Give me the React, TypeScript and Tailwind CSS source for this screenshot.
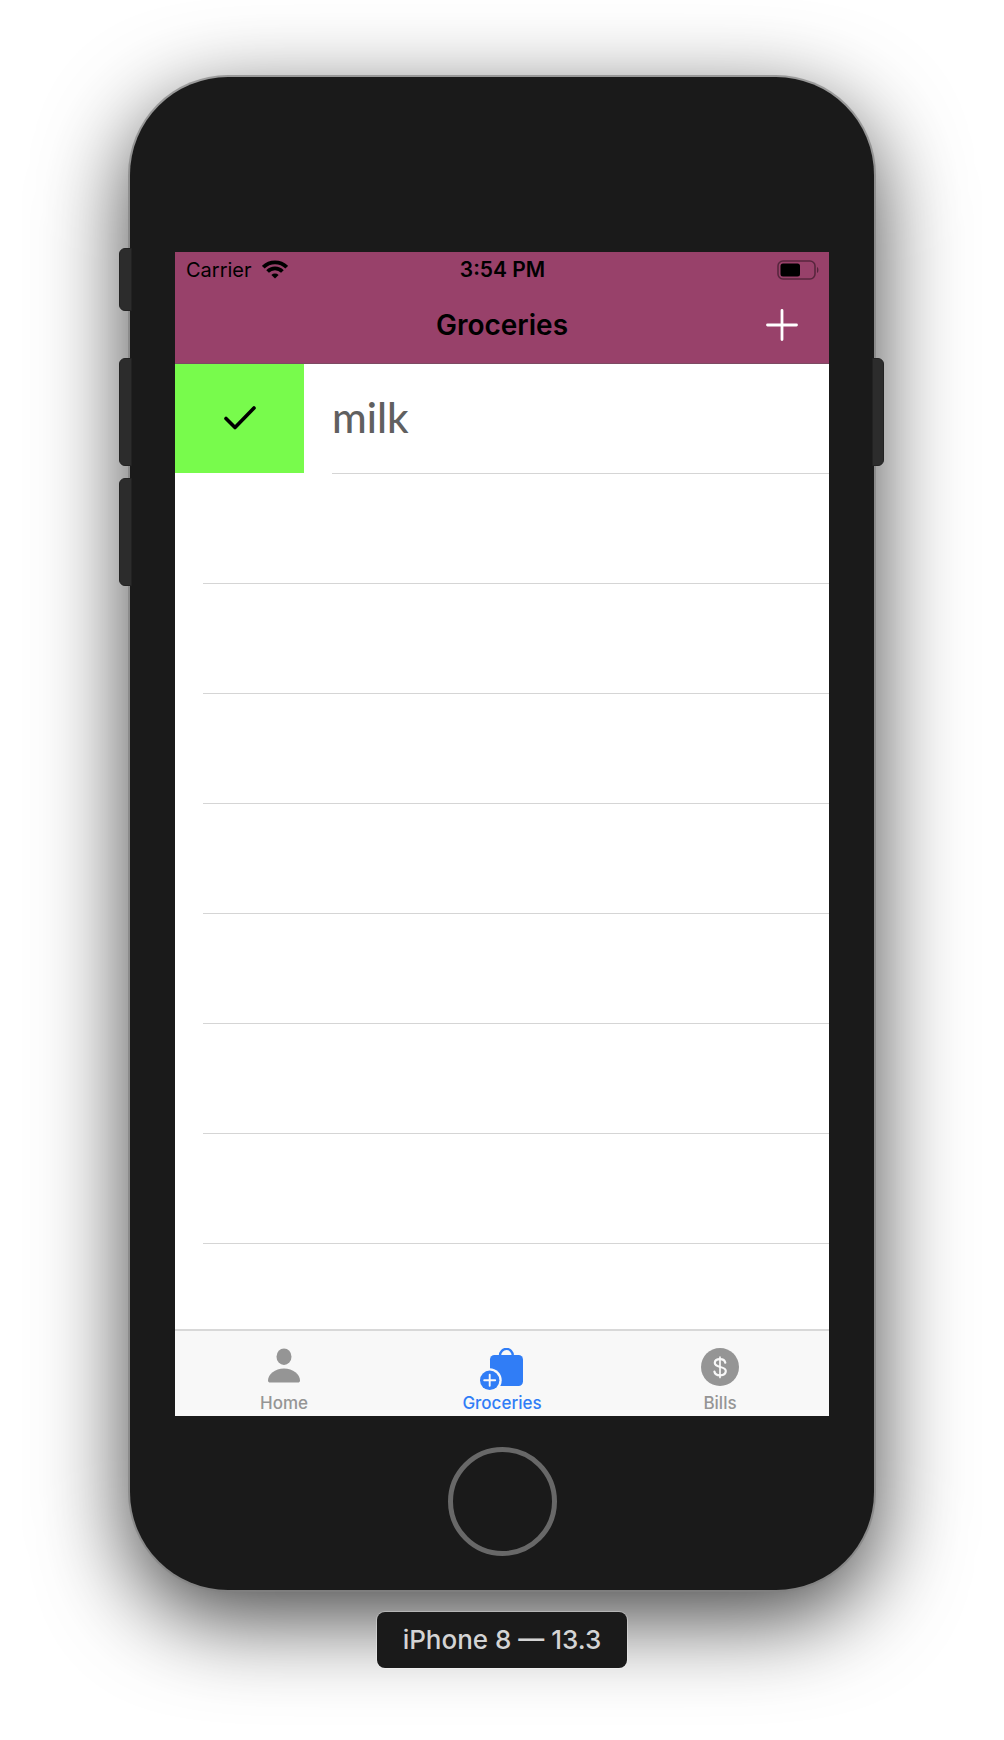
import React from "react";

const emptyRows = [1, 2, 3, 4, 5, 6, 7];

function WifiIcon() {
  return (
    <svg width="26" height="19" viewBox="0 0 26 19" aria-hidden="true">
      <g fill="none" stroke="#000" strokeWidth="3.8">
        <path d="M1.3 7.2a16.6 16.6 0 0 1 23.4 0" />
        <path d="M5.6 11.5a10.5 10.5 0 0 1 14.8 0" />
      </g>
      <path d="M13 18.6 9.4 15a5.1 5.1 0 0 1 7.2 0Z" />
    </svg>
  );
}

function BatteryIcon() {
  return (
    <svg width="42" height="20" viewBox="0 0 42 20" aria-hidden="true">
      <rect x="1" y="1" width="37" height="18" rx="5" fill="none" stroke="#000" strokeOpacity="0.42" strokeWidth="1.6" />
      <rect x="3.5" y="3.5" width="19.5" height="13" rx="2.5" />
      <path d="M40 7v6c1.9-.6 1.9-5.4 0-6Z" fillOpacity="0.45" />
    </svg>
  );
}

function PlusIcon() {
  return (
    <svg width="32" height="32" viewBox="0 0 32 32" aria-hidden="true">
      <path d="M16 1.5v29M1.5 16h29" stroke="#fff" strokeWidth="2.8" strokeLinecap="round" />
    </svg>
  );
}

function CheckIcon() {
  return (
    <svg width="32" height="24" viewBox="0 0 32 24" fill="none" aria-hidden="true">
      <path d="M2 12.5 11 21.5 30 2" stroke="#000" strokeWidth="3.6" strokeLinecap="round" strokeLinejoin="round" />
    </svg>
  );
}

function PersonIcon() {
  return (
    <svg width="44" height="44" viewBox="0 0 44 44" fill="#959595" aria-hidden="true">
      <ellipse cx="22" cy="8.7" rx="7.5" ry="8.3" />
      <path d="M6 32.5c0-6 7-12 16-12s16 6 16 12c0 1.5-.9 2-2.2 2H8.2C6.9 34.5 6 34 6 32.500Z" />
    </svg>
  );
}

function BagIcon() {
  return (
    <svg width="44" height="44" viewBox="0 0 44 44" aria-hidden="true">
      <path d="M20 8.500v-1a6.400 6.600 0 0 1 12.800 0v1" fill="none" stroke="#307df6" strokeWidth="2.300" />
      <rect x="10" y="7" width="33" height="31" rx="4.500" fill="#307df6" />
      <circle cx="9.700" cy="32.300" r="12" fill="#f8f8f8" />
      <circle cx="9.700" cy="32.300" r="9.700" fill="#307df6" />
      <path d="M9.700 26.800v11M4.200 32.300h11" stroke="#f8f8f8" strokeWidth="1.900" strokeLinecap="round" />
    </svg>
  );
}

function DollarIcon() {
  return (
    <svg width="44" height="44" viewBox="0 0 44 44" aria-hidden="true">
      <circle cx="22" cy="19" r="19" fill="#959595" />
      <g fill="none" stroke="#f8f8f8" strokeWidth="2.2" strokeLinecap="round">
        <path d="M22 9v20.500" strokeWidth="1.700" />
        <path d="M27.300 14.700c-.5-2.300-2.500-3.500-5.300-3.500-3 0-5.200 1.500-5.200 3.900 0 5.300 11 2.500 11 8 0 2.600-2.300 4.200-5.700 4.200-3.300 0-5.300-1.400-5.700-3.800" />
      </g>
    </svg>
  );
}

function Tab({ label, active, icon }: { label: string; active?: boolean; icon: React.ReactNode }) {
  return (
    <button
      type="button"
      aria-current={active ? "page" : undefined}
      className={`flex flex-1 flex-col items-center pt-[17px] ${active ? "text-[#307df6]" : "text-[#959595]"}`}
    >
      {icon}
      <span className="text-[17px] font-medium leading-[22px]">{label}</span>
    </button>
  );
}

export default function App() {
  return (
    <main className="flex flex-col items-center overflow-hidden bg-white px-[130px] pt-[77px] pb-[72px] font-[Inter,'Liberation_Sans',sans-serif]">
      <div className="relative w-full rounded-[98px] bg-[#1a1a1a] px-[45px] pt-[175px] pb-[34px] shadow-[0_0_0_2px_rgba(130,130,130,0.7),0_27px_90px_rgba(0,0,0,0.75)]">
        <span className="absolute top-[171px] -left-[11px] h-[63px] w-[13px] rounded-l-md border border-[#222] bg-[#2c2c2c]" />
        <span className="absolute top-[281px] -left-[11px] h-[108px] w-[13px] rounded-l-md border border-[#222] bg-[#2c2c2c]" />
        <span className="absolute top-[401px] -left-[11px] h-[108px] w-[13px] rounded-l-md border border-[#222] bg-[#2c2c2c]" />
        <span className="absolute top-[281px] -right-[10px] h-[108px] w-[12px] rounded-r-md border border-[#222] bg-[#2c2c2c]" />

        <div className="bg-white">
          <header className="border-b border-[#7d4a63] bg-[#98416a] text-black">
            <div className="grid h-[35px] grid-cols-[1fr_auto_1fr] items-center pr-[10px] pl-[11px] text-[20px] leading-6">
              <div className="flex items-center gap-[10px]">
                <span>Carrier</span>
                <WifiIcon />
              </div>
              <span className="text-center text-[21px] font-semibold">3:54 PM</span>
              <div className="flex justify-end">
                <BatteryIcon />
              </div>
            </div>
            <div className="grid h-[76px] grid-cols-[1fr_auto_1fr] items-center px-[31px]">
              <h1 className="col-start-2 text-[28px] font-semibold leading-9">Groceries</h1>
              <button type="button" aria-label="Add grocery" className="justify-self-end">
                <PlusIcon />
              </button>
            </div>
          </header>

          <ul>
            <li className="flex h-[110px]">
              <button type="button" aria-label="Mark milk as done" className="mb-px flex w-[129px] items-center justify-center bg-[#78fb4c] pb-[2px]">
                <CheckIcon />
              </button>
              <div className="ml-7 flex flex-1 items-center border-b border-[#d5d5d5] pb-1 font-[Lato,sans-serif] text-[42px] font-medium leading-[48px] text-[#606060]">
                milk
              </div>
            </li>
            {emptyRows.map((row) => (
              <li key={row} className="ml-7 h-[110px] border-b border-[#d5d5d5]" />
            ))}
            <li className="h-[85px]" />
          </ul>

          <nav className="flex h-[87px] border-t-2 border-[#d8d8d8] bg-[#f8f8f8]">
            <Tab label="Home" icon={<PersonIcon />} />
            <Tab label="Groceries" active icon={<BagIcon />} />
            <Tab label="Bills" icon={<DollarIcon />} />
          </nav>
        </div>

        <button
          type="button"
          aria-label="Home button"
          className="mx-auto mt-[31px] block size-[109px] rounded-full border-[5px] border-[#686868]"
        />
      </div>

      <p className="relative mt-[22px] rounded-lg bg-[#1a1a1a] px-[26px] py-3 text-[26px] font-medium leading-8 text-[#d4d4d4] shadow-[0_0_0_1px_rgba(255,255,255,0.3)]">
        iPhone 8 — 13.3
      </p>
    </main>
  );
}
